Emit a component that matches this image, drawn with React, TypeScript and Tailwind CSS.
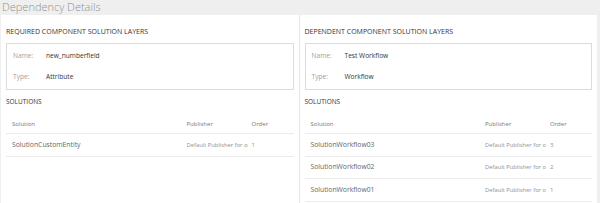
const font = { fontFamily: '"Open Sans", "Noto Sans", sans-serif' };

type Row = { solution: string; publisher: string; order: string };

function Panel({
  title,
  name,
  type,
  rows,
}: {
  title: string;
  name: string;
  type: string;
  rows: Row[];
}) {
  return (
    <div className="flex h-full flex-1 flex-col bg-white px-[5px]">
      <div className="mt-[12px] h-[10px] text-[7px] leading-[10px] text-[#333]">{title}</div>
      <div className="mt-[6px] flex h-[47px] flex-col border border-[#dcdcdc] px-[6px]">
        <div className="mt-[7px] flex h-[10px] items-center text-[6.6px] leading-[10px]">
          <span className="w-[33px] text-[#a0a0a0]">Name:</span>
          <span className="text-[#333]">{name}</span>
        </div>
        <div className="mt-[11px] flex h-[10px] items-center text-[6.6px] leading-[10px]">
          <span className="w-[33px] text-[#a0a0a0]">Type:</span>
          <span className="text-[#333]">{type}</span>
        </div>
      </div>
      <div className="mt-[7px] h-[10px] text-[6.5px] leading-[10px] text-[#333]">SOLUTIONS</div>
      <div className="mt-[12px] flex flex-col">
        <div className="flex h-[15px] items-start border-b border-[#ececec] pl-[6px] text-[6px] leading-[10px] text-[#777]">
          <span className="flex-1">Solution</span>
          <span className="w-[65px]">Publisher</span>
          <span className="w-[42px]">Order</span>
        </div>
        {rows.map((r) => (
          <div
            key={r.solution}
            className="flex h-[22.5px] items-center border-b border-[#ececec] pl-[6px] leading-[10px] text-[#666]"
          >
            <span className="flex-1 text-[6.8px]">{r.solution}</span>
            <span className="w-[61px] overflow-hidden whitespace-nowrap text-[5.8px] text-[#909090]">
              {r.publisher}
            </span>
            <span className="w-[46px] pl-[4px] text-[6px] text-[#909090]">{r.order}</span>
          </div>
        ))}
      </div>
    </div>
  );
}

export default function App() {
  return (
    <div className="flex h-[203px] w-[600px] flex-col overflow-hidden bg-[#efefef]" style={font}>
      <div className="h-[15px] pl-[2px] pt-[1px] text-[11px] font-light leading-[12px] text-[#8f8f8f]">
        Dependency Details
      </div>
      <div className="flex flex-1 pl-[1px] pr-[3px]">
        <Panel
          title="REQUIRED COMPONENT SOLUTION LAYERS"
          name="new_numberfield"
          type="Attribute"
          rows={[
            { solution: "SolutionCustomEntity", publisher: "Default Publisher for org", order: "1" },
          ]}
        />
        <div className="w-px bg-[#e6e6e6]" />
        <Panel
          title="DEPENDENT COMPONENT SOLUTION LAYERS"
          name="Test Workflow"
          type="Workflow"
          rows={[
            { solution: "SolutionWorkflow03", publisher: "Default Publisher for org", order: "3" },
            { solution: "SolutionWorkflow02", publisher: "Default Publisher for org", order: "2" },
            { solution: "SolutionWorkflow01", publisher: "Default Publisher for org", order: "1" },
          ]}
        />
      </div>
    </div>
  );
}
